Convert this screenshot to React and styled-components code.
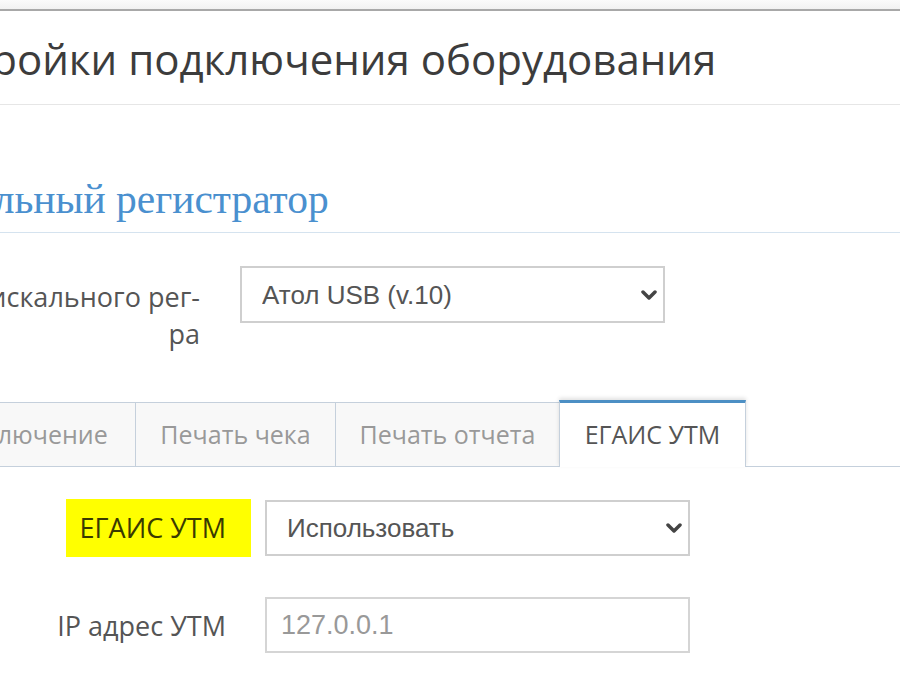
import React from "react";
import styled, { createGlobalStyle } from "styled-components";

const Global = createGlobalStyle`
  html, body { margin: 0; padding: 0; background: #fff; }
  body { width: 900px; height: 700px; overflow: hidden; }
  * { box-sizing: border-box; }
`;

const Page = styled.div`
  width: 900px;
  height: 700px;
  overflow: hidden;
  background: #fff;
  font-family: "Open Sans", "Liberation Sans", sans-serif;
`;

const TopStrip = styled.div`
  height: 11px;
  background: linear-gradient(#fafafa, #f1f1f1);
  border-bottom: 2px solid #a8a8a8;
`;

const Header = styled.div`
  height: 94px;
  display: flex;
  align-items: center;
  border-bottom: 1px solid #e6e6e6;
  white-space: nowrap;
`;

const Title = styled.h4`
  margin: 2px 0 0 -103px;
  font-weight: 400;
  font-size: 42px;
  line-height: 46px;
  color: #3c3c3c;
`;

const Body = styled.div`
  margin-left: -90px;
  width: calc(100% + 90px);
`;

const SectionTitle = styled.h3`
  margin: 71px 0 0;
  padding-bottom: 10px;
  font-family: "Liberation Serif", "DejaVu Serif", serif;
  font-weight: 400;
  font-size: 41.5px;
  line-height: 46px;
  text-indent: -28px;
  color: #4a90cf;
  border-bottom: 1px solid #d5e3ef;
  white-space: nowrap;
`;

const FormRow = styled.div`
  display: flex;
  align-items: ${(p) => (p.$top ? "flex-start" : "center")};
  gap: ${(p) => p.$gap || 40}px;
  margin-top: ${(p) => p.$mt || 0}px;
`;

const Label = styled.label`
  width: 290px;
  flex: none;
  text-align: right;
  font-size: 27px;
  line-height: 37px;
  color: #555;
  padding-top: ${(p) => p.$pt || 0}px;
`;

const Highlight = styled.span`
  display: inline-block;
  background: #ffff00;
  color: #3a3a00;
  padding: 10px 25px 11px 14px;
  margin-right: -25px;
`;

const SelectWrap = styled.div`
  position: relative;
  width: 425px;
  height: ${(p) => p.$h || 56}px;
  flex: none;
`;

const Select = styled.select`
  appearance: none;
  -webkit-appearance: none;
  width: 100%;
  height: 100%;
  border: 2px solid #cfcfcf;
  border-radius: 0;
  background: #fff;
  padding: 0 50px 0 20px;
  font-family: "Liberation Sans", Arial, sans-serif;
  font-size: 26px;
  color: #555;
  outline: none;
`;

const Chevron = styled.svg`
  position: absolute;
  right: 8px;
  top: 50%;
  width: 16px;
  height: 11px;
  margin-top: -5px;
  pointer-events: none;
`;

const Input = styled.input`
  width: 425px;
  height: 56px;
  flex: none;
  border: 2px solid #d5d5d5;
  border-radius: 0;
  padding: 0 14px;
  font-family: "Liberation Sans", Arial, sans-serif;
  font-size: 27px;
  color: #555;
  outline: none;
  &::placeholder { color: #999; }
`;

const TabList = styled.div`
  display: flex;
  align-items: flex-end;
  margin-top: 49px;
  border-bottom: 1px solid #c5d0dc;
  height: 66px;
`;

const Tab = styled.div`
  flex: none;
  width: ${(p) => p.$w}px;
  text-align: center;
  height: ${(p) => (p.$active ? 67 : 64)}px;
  margin-bottom: ${(p) => (p.$active ? -1 : 0)}px;
  margin-left: -1px;
  border: 1px solid #c5d0dc;
  border-bottom: none;
  border-top: ${(p) => (p.$active ? "3px solid #4c8fc4" : "1px solid #c5d0dc")};
  background: ${(p) => (p.$active ? "#fff" : "#f8f8f8")};
  box-shadow: ${(p) => (p.$active ? "0 -2px 4px rgba(0,0,0,0.12)" : "none")};
  position: relative;
  z-index: ${(p) => (p.$active ? 1 : 0)};
  font-size: 25px;
  line-height: 62px;
  color: ${(p) => (p.$active ? "#555" : "#999")};
  white-space: nowrap;
`;

const Pane = styled.div`
  padding: 32px 0 0 26px;
  display: flex;
  flex-direction: column;
  gap: 40px;
`;

const ChevronIcon = () => (
  <Chevron viewBox="0 0 16 11">
    <polyline points="2,2 8,8 14,2" fill="none" stroke="#444" strokeWidth="3.5" strokeLinecap="round" strokeLinejoin="round" />
  </Chevron>
);

export default function App() {
  return (
    <Page>
      <Global />
      <TopStrip />
      <Header>
        <Title>Настройки подключения оборудования</Title>
      </Header>
      <Body>
        <SectionTitle>Фискальный регистратор</SectionTitle>
        <FormRow $top $mt={33}>
          <Label $pt={12}>Тип фискального рег-ра</Label>
          <SelectWrap $h={57}>
            <Select defaultValue="atol">
              <option value="atol">Атол USB (v.10)</option>
            </Select>
            <ChevronIcon />
          </SelectWrap>
        </FormRow>
        <TabList>
          <Tab $w={227}>Подключение</Tab>
          <Tab $w={201}>Печать чека</Tab>
          <Tab $w={225}>Печать отчета</Tab>
          <Tab $w={187} $active>ЕГАИС УТМ</Tab>
        </TabList>
        <Pane>
          <FormRow $gap={39}>
            <Label>
              <Highlight>ЕГАИС УТМ</Highlight>
            </Label>
            <SelectWrap $h={56}>
              <Select defaultValue="use">
                <option value="use">Использовать</option>
              </Select>
              <ChevronIcon />
            </SelectWrap>
          </FormRow>
          <FormRow $gap={39}>
            <Label>IP адрес УТМ</Label>
            <Input placeholder="127.0.0.1" />
          </FormRow>
        </Pane>
      </Body>
    </Page>
  );
}
